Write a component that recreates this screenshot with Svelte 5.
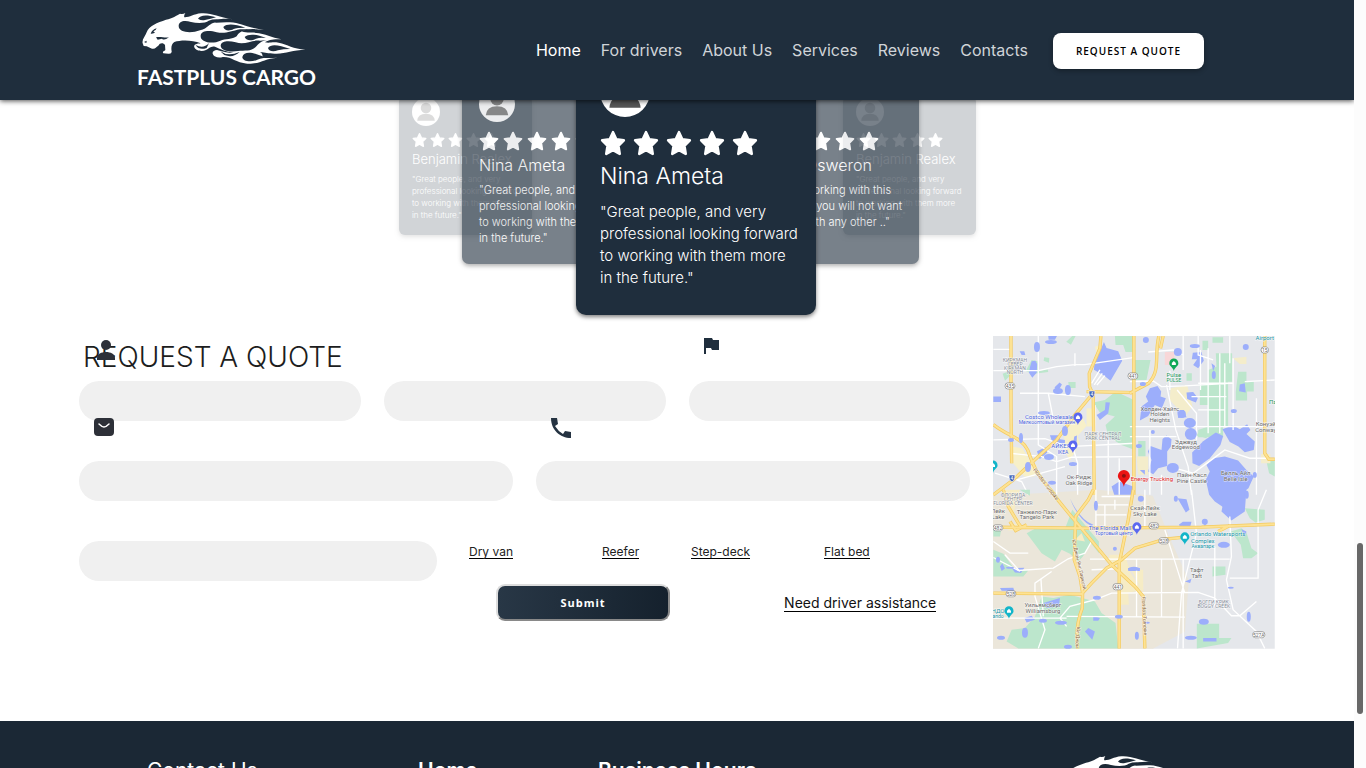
<script>
  const links = ['Home', 'For drivers', 'About Us', 'Services', 'Reviews', 'Contacts'];
  const great = '"Great people, and very\nprofessional looking forward\nto working with them more\nin the future."';
  const reviews = [
    { name: 'Benjamin Realex', text: great, place: 'far far-left' },
    { name: 'Benjamin Realex', text: great, place: 'far far-right' },
    { name: 'Nina Ameta', text: great, place: 'mid mid-left' },
    { name: 'Mark Osweron', text: '"I enjoy working with this\ncompany, you will not want\nto work with any other .."', place: 'mid mid-right' },
    { name: 'Nina Ameta', text: great, place: 'front' }
  ];
  const trailers = ['Dry van', 'Reefer', 'Step-deck', 'Flat bed'];
  const mapLabels = [
    [22, 26, 'КИРКМАН', 'g s'], [22, 30, 'СЕВЕР', 'g s'], [22, 34, 'KIRKMAN', 'g s'], [22, 38, 'NORTH', 'g s'],
    [56, 83, 'Costco Wholesale', 'b'], [54, 88, 'Мелкооптовый магазин', 'b s'],
    [68, 112, 'АЙКЕЯ', 'b'], [70, 118, 'IKEA', 'b s'],
    [110, 100, 'ПАРК СЕНТРАЛ', 'g s'], [110, 104, 'PARK CENTRAL', 'g s'],
    [86, 143, 'Ок-Ридж', 'd'], [86, 149, 'Oak Ridge', 'd'],
    [159, 145, 'Energy Trucking', 'r'],
    [181, 41, 'Pulse', 'n'], [181, 46, 'PULSE', 'n s'],
    [272, 4, 'Airport', 'c'], [280, 68, 'Па', 'n'],
    [167, 75, 'Холден-Хайтс', 'd'], [167, 80, 'Holden', 'd'], [167, 86, 'Heights', 'd'],
    [193, 108, 'Эджвуд', 'd'], [193, 113, 'Edgewood', 'd'],
    [273, 90, 'Конуэй', 'd'], [273, 96, 'Conway', 'd'],
    [199, 141, 'Пайн-Касл', 'd'], [199, 147, 'Pine Castle', 'd'],
    [243, 139, 'Белль Айл', 'd'], [243, 145, 'Belle Isle', 'd'],
    [20, 161, 'ФЛОРИДА', 'g s'], [20, 165, 'СЕНТЕР', 'g s'], [20, 169, 'FLORIDA CENTER', 'g s'],
    [5, 177, 'Лейк', 'd'], [5, 183, 'Lake', 'd'],
    [44, 178, 'Танжело-Парк', 'd'], [44, 183, 'Tangelo Park', 'd'],
    [152, 174, 'Скай-Лейк', 'd'], [152, 180, 'Sky Lake', 'd'],
    [117, 194, 'The Florida Mall', 'b'], [121, 199, 'Торговый центр', 'b s'],
    [225, 200, 'Orlando Watersports', 'c'], [210, 207, 'Complex', 'c'], [210, 212, 'Аквапарк', 'c s'],
    [204, 236, 'Тафт', 'd'], [204, 242, 'Taft', 'd'],
    [221, 268, 'БОГГИ КРИК', 'g s'], [221, 272, 'BOGGY CREEK', 'g s'],
    [50, 271, 'Уильямсберг', 'd'], [50, 277, 'Williamsburg', 'd'],
    [5, 277, 'НДО', 'c'], [5, 282, 'ando', 'c s']
  ];
  const shields = [[17, 50, '435'], [140, 40, '441'], [272, 14, '15'], [5, 192, '482'], [161, 190, '482'], [171, 205, '528'], [18, 258, '528'], [125, 251, '441'], [266, 299, '527A']];
  const ponds = [[44, 11, 3, 5], [58, 6, 6, 2], [65, 55, 5, 3], [75, 54, 3, 5], [51, 77, 6, 2], [28, 102, 2, 5], [18, 104, 3, 2], [72, 95, 3, 5], [56, 121, 5, 3], [80, 128, 4, 2], [35, 131, 3, 5], [59, 147, 4, 2], [153, 4, 3, 3], [185, 16, 4, 4], [202, 10, 5, 2], [253, 11, 3, 3], [221, 39, 2, 4], [241, 75, 3, 2], [146, 110, 3, 2], [160, 96, 2, 2], [150, 48, 3, 2], [189, 78, 4, 4], [197, 87, 6, 5], [198, 98, 6, 6], [180, 132, 6, 5], [262, 139, 2, 3], [103, 170, 2, 5], [148, 163, 3, 3], [122, 213, 2, 2], [141, 233, 6, 2], [212, 186, 3, 3], [231, 209, 6, 3], [50, 285, 4, 2], [68, 287, 6, 2], [126, 281, 4, 2], [154, 287, 3, 1], [211, 286, 5, 3], [238, 252, 3, 1], [5, 224, 2, 3], [17, 232, 4, 1], [32, 297, 3, 5], [8, 302, 4, 2], [254, 159, 2, 4], [183, 163, 2, 3], [104, 262, 4, 2], [198, 302, 6, 2], [256, 281, 2, 5], [75, 311, 4, 2], [144, 300, 2, 4]];
  const pins = [[181, 28, '#0fa958'], [85, 82, '#5b68f0'], [80, 110, '#5b68f0'], [144, 192, '#5b68f0'], [192, 202, '#12b5c9'], [16, 276, '#12b5c9'], [0, 130, '#12b5c9']];
</script>

{#snippet panther()}
  <svg class="panther" viewBox="51 33 528 162" aria-hidden="true">
    <path fill="#fff" d="M68 127C65 116 76 106 80 94C87 74 112 65 138 56C158 52 170 43 180 38Q188 41 196 36Q191 44 193 49C209 50 219 39 244 37C276 35 294 49 338 55C304 51 291 56 278 64C293 67 310 62 330 64C362 66 376 78 432 87C397 83 382 83 365 91C382 98 395 92 417 97C445 101 462 114 497 116C460 113 448 116 435 124C450 127 455 122 476 125C503 130 519 144 556 146C519 147 498 157 470 158C443 159 435 153 420 154C432 159 422 166 435 171Q450 172 473 170C430 173 424 189 382 188C345 184 334 166 308 168Q296 172 284 166C272 157 279 147 291 147C304 149 318 158 340 154C319 153 303 146 285 137C272 134 267 143 258 147C244 154 226 148 223 139C220 131 230 128 242 127C218 117 184 116 163 123C154 128 153 141 155 151Q156 159 145 158L130 157C126 151 132 151 136 147L135 132C130 124 119 125 115 134C107 138 107 145 96 143L80 136L71 135Z"/>
    <g class="cut">
      <path d="M176 75C176 59 195 57 213 63C232 67 257 67 266 59Q281 52 309 56Q290 58 281 65C264 71 266 80 240 88C213 98 176 95 176 75Z"/>
      <path d="M234 53C239 43 258 39 288 49Q272 54 255 57Q244 60 234 53Z"/>
      <path d="M242 104C243 88 270 88 290 94C316 99 332 91 360 85L393 85C365 89 356 95 350 106C337 116 316 113 301 119C276 131 240 123 242 104Z"/>
      <path d="M310 78C322 67 343 69 376 80Q350 80 341 84C329 91 313 90 310 78Z"/>
      <path d="M302 134C304 119 326 119 347 124C376 133 395 116 420 119L441 117C423 120 415 129 407 138C392 153 374 147 354 150C326 154 303 148 302 134Z"/>
      <path d="M374 108C385 99 405 98 438 111Q421 108 408 113C393 121 379 119 374 108Z"/>
      <path d="M444 141C453 128 476 132 511 144Q489 144 474 148C459 153 447 151 444 141Z"/>
      <path d="M367 168C371 153 390 153 410 160C423 165 437 171 456 169Q427 170 412 176C391 186 367 180 367 168Z"/>
      <path d="M92 98Q96 86 110 82Q107 90 100 91L105 95Q96 99 92 98Z"/>
      <path d="M108 109C122 105 133 112 147 109Q132 120 126 113L113 116Z"/>
      <path d="M72 123L80 119L79 126Z"/>
      <path d="M227 132Q250 145 267 126L260 141Q237 149 227 132Z"/>
      <path d="M301 151Q324 168 359 153Q339 172 313 162Z"/>
    </g>
  </svg>
{/snippet}

<div class="window">
  <div class="page">
    <header>
      <a class="logo" href="#home">{@render panther()}<span>FASTPLUS CARGO</span></a>
      <nav>
        {#each links as link, i}
          <a href="#{link}" class:active={i === 0}>{link}</a>
        {/each}
        <button class="quote">REQUEST A QUOTE</button>
      </nav>
    </header>

    <section class="carousel">
      {#each reviews as r}
        <article class="card {r.place}">
          <svg class="avatar" viewBox="0 0 48 48" aria-hidden="true">
            <circle cx="24" cy="24" r="24" fill="#fff"/>
            <circle cx="24" cy="17" r="9" fill="#555"/>
            <path d="M9 39Q10 27 24 27Q38 27 39 39Z" fill="#555"/>
          </svg>
          <div class="stars">
            {#each [1, 2, 3, 4, 5] as s (s)}
              <svg viewBox="0 0 24 24" aria-hidden="true"><path d="M12 2L15 8.6L22 9.5L17 14.5L18.2 22L12 18.6L5.800 22L7 14.500L2 9.500L9 8.600Z" fill="#fff" stroke="#fff" stroke-width="2.400" stroke-linejoin="round"/></svg>
            {/each}
          </div>
          <h3>{r.name}</h3>
          <p>{r.text}</p>
        </article>
      {/each}
    </section>

    <main>
      <form>
        <h2>REQUEST A QUOTE</h2>
        <div class="row three">
          <div class="field">
            <svg class="icon person" viewBox="0 0 18 20" aria-hidden="true"><circle cx="9" cy="5" r="5" fill="#2d3038"/><path d="M0 20V18C0 10 18 10 18 18V20Z" fill="#2d3038"/></svg>
            <input type="text" aria-label="First name" />
          </div>
          <div class="field"><input type="text" aria-label="Last name" /></div>
          <div class="field">
            <svg class="icon flag" viewBox="0 0 16 16" aria-hidden="true"><path d="M1 0H9L10 2H16V12H9L8 10H3V16H1Z" fill="#1f2e3d"/></svg>
            <input type="text" aria-label="Company" />
          </div>
        </div>
        <div class="row two">
          <div class="field">
            <svg class="icon mail" viewBox="0 0 20 18" aria-hidden="true"><rect width="20" height="18" rx="4" fill="#2d3038"/><path d="M5 6Q8 9 10 9T15 6" fill="none" stroke="#fff" stroke-width="1.500" stroke-linecap="round"/></svg>
            <input type="email" aria-label="Email" />
          </div>
          <div class="field">
            <svg class="icon phone" viewBox="0 0 20 20" aria-hidden="true"><path d="M0 0H6L7 6L4 8Q7 13 12 16L14 13L20 14V20C9 20 0 12 0 0Z" fill="#253342"/></svg>
            <input type="tel" aria-label="Phone" />
          </div>
        </div>
        <div class="row last">
          <div class="field"><input type="text" aria-label="Message" /></div>
          <div class="trailers">
            {#each trailers as t}<a href="#{t}">{t}</a>{/each}
          </div>
        </div>
        <div class="actions">
          <button type="button" class="submit">Submit</button>
          <a href="#assistance">Need driver assistance</a>
        </div>
      </form>

      <svg class="map" viewBox="0 0 282 313" role="img" aria-label="Map">
        <rect width="282" height="313" fill="#e5e7eb"/>
        <path d="M0 160L105 154L160 160L176 200L196 245L192 296L160 313H0Z" fill="#ebe6da"/>
        <g transform="translate(-8 -6) scale(.333333)">
          <g fill="#bce6cc">
            <path d="M325 218L360 210L393 185L450 212V360L410 345L370 320L362 285L390 260L345 248Z"/>
            <path d="M250 156H272V174H252ZM53 131L68 125L78 134L60 152ZM122 123L140 90L158 94L163 124L188 118L190 126L142 132ZM178 82L193 84L192 98L176 92ZM244 35L262 18H272L258 44ZM390 18H450V66H422L415 45H392Z"/>
          </g>
          <g fill="#f7f0c9"><path d="M238 288L290 255L305 288L278 318L285 340L255 392L238 360ZM78 350L112 355L132 388L155 405L148 440H118L80 395ZM305 235H330V290H305ZM330 50L350 44L340 90Z"/></g>
          <g fill="#9caefb">
            <path d="M330 82L344 68L357 36L365 54L400 64L412 92L377 152L356 136L327 119Z"/>
            <path d="M135 112L140 94L151 92L157 103L155 128L142 143L132 128ZM209 172L224 158L231 164L216 190ZM335 255L360 240L362 217L375 218L370 250L345 270ZM156 364L182 352L187 368L164 388ZM195 316H225V328L240 330V340H203ZM380 470L403 455L445 470L440 495H388ZM104 64H118L121 75H110ZM25 200H48V216H25ZM190 18H216L210 29H191ZM262 355L268 320L276 317L274 357Z"/>
          </g>
          <g fill="none" stroke="#fff" stroke-width="4">
            <path d="M25 122H105L160 122L215 110L270 104H300L450 82M160 18V345L215 380V495M105 190H190L300 200M190 190L207 277M330 225V495M25 58H80M25 330L180 326L250 350L450 340M75 370L170 380L215 395L260 382L450 380M95 450L240 410M270 70V108M30 430L110 455L130 495M370 320V495M260 340L278 400V495M403 385V495M320 160L345 120M328 165L352 130M336 165L360 137"/>
          </g>
          <g fill="none" stroke="#f3c95b" stroke-width="10" stroke-linejoin="round">
            <path d="M78 18V230L80 400M348 18L345 55L313 130L314 170L325 195L328 495M305 185L450 188M25 495L85 450L160 380L215 330L270 255L320 195M25 284C70 320 110 322 128 360C146 410 155 435 210 495" stroke="#f3ca60"/>
            <path d="M78 18V230L80 400M348 18L345 55L313 130L314 170L325 195L328 495M305 185L450 188M25 495L85 450L160 380L215 330L270 255L320 195M25 284C70 320 110 322 128 360C146 410 155 435 210 495" stroke="#fde293" stroke-width="6"/>
          </g>
        </g>
        <g transform="translate(137 -6) scale(.333333)">
          <g fill="#bce6cc"><path d="M258 70H307V155H295V290H280V322H205V300L235 290V225H210V165H235V120L260 110ZM218 32H235V60H218ZM248 22H280V38H248ZM170 130H186V152H170ZM325 125H350V158L372 155V185H352V212H318V185ZM10 90H62L50 150H10ZM25 333H47V380H25ZM408 385H435V440L418 430ZM190 315L240 300L230 325Z"/></g>
          <path d="M122 175L172 165L188 230L165 260L120 210ZM310 85L350 80V102H330ZM394 372H422V400H394ZM20 380H55V435H25Z" fill="#f4edcb"/>
          <path d="M105 66H133V105H105Z" fill="#f8d7d8"/>
          <g fill="#9caefb">
            <path d="M60 175L83 168L94 185L92 200L108 205L96 235L75 225L55 258L30 272L35 230L55 215L48 200Z"/>
            <path d="M62 348L95 360L98 327L110 317L125 328L123 350L112 365V408L85 415L70 433L55 425L65 390L54 365Z"/>
            <path d="M187 368L220 334L258 308L280 318L272 345L240 385L208 408L188 400Z"/>
            <path d="M278 298L310 286L330 298L352 283L362 300L350 312L375 335L372 360L345 367L326 350L300 336Z"/>
            <path d="M230 405L250 385L285 380L325 392L350 420L372 440L356 475L330 495L318 525L285 535L255 515L238 495L228 450L240 425Z"/>
            <path d="M170 188L190 186L204 204L198 218L172 207ZM189 68L215 66L222 92L205 115L190 105L202 88H186ZM330 164L345 160L348 188L328 184ZM245 100L256 108L250 123ZM142 240H162L170 262L145 264ZM30 420H45V435Z"/>
          </g>
          <g fill="none" stroke="#fff" stroke-width="4">
            <path d="M0 155L70 153L95 170L165 168L300 160M110 165L138 300L175 410L185 495M55 66L130 60L160 75M120 122V180M142 180L200 250V330M160 18V120M205 18V75L250 90M0 290H400M300 18V100M285 100V290M310 85V300M212 60V180M235 55V310M135 415L190 430L245 390L285 360L360 385L410 385M60 300V495M95 435V495M380 205V495M0 320H140M185 200H290M205 160H310M205 240H285M270 70V310M345 155L435 150"/>
          </g>
          <path d="M87 18C72 80 94 120 56 160L0 190M12 18V495M405 18V370L417 388H435M100 18L92 55" fill="none" stroke="#f3ca60" stroke-width="10"/>
          <path d="M87 18C72 80 94 120 56 160L0 190M12 18V495M405 18V370L417 388H435M100 18L92 55" fill="none" stroke="#fde293" stroke-width="6"/>
        </g>
        <g transform="translate(-8 154) scale(.333333)">
          <g fill="#bce6cc"><path d="M150 117H240L262 60L342 155V190L318 160L294 200L280 215L255 192L230 180L210 215L170 190L125 130ZM25 180L55 192L90 240L130 242L115 260H25ZM170 320L205 325L255 315L330 335L350 370L392 400L400 476H100L65 455L80 420L120 415L150 380ZM636 402H703V445H740L730 460L636 476ZM738 125L770 115L785 128L800 175L820 190L800 205H775L768 165ZM780 55L840 60V90L812 98L795 85ZM683 230H722V255L683 260ZM104 0H135V18ZM25 110L50 112L45 140H25Z"/></g>
          <path d="M55 0H105L85 70L110 110L95 122H70V110L95 100L70 20ZM372 195H420L437 250L470 300L430 310L432 345H408V230L372 220ZM270 150L290 130L300 155ZM440 240H475V310Z" fill="#f6ecc5"/>
          <g fill="#9caefb">
            <path d="M683 0H785L780 65L740 92L710 65L717 30L682 15ZM578 25L605 28L614 60L603 68ZM582 105L594 96H620L615 115H590ZM655 88L667 95L660 110ZM770 118L785 125L780 142ZM80 235L118 234L108 250L90 248ZM45 230L52 220L60 236L50 244ZM310 415L330 425L322 450L300 425ZM325 378L345 385L340 393H325ZM118 385L140 378L150 390L125 398ZM175 340L225 325L222 350L185 355ZM45 295L85 294L88 304L50 303ZM600 275L620 267L616 280ZM655 445H695V455H655Z"/>
            <path d="M255 25Q285 90 325 105L321 110Q280 90 255 25ZM430 235H465V244H430Z"/>
          </g>
          <g fill="none" stroke="#fff" stroke-width="4">
            <path d="M25 203L100 242L205 235L250 207L300 190L320 155M60 195L105 245M320 240L400 237M315 208H735M25 155L75 190H130M168 268L175 380M200 245L150 280V320L180 420L160 476M245 410L225 385L255 350L330 330L380 310L640 308L690 325L740 378H765L815 335M25 385H245M245 380L600 382M455 208V380M530 210V380M595 208V476M620 0L635 130L610 230L590 310L578 476M735 80L740 200L725 270L745 360L815 425L840 476M735 265H820V60L845 0M690 170V350M333 0V120M360 45V120M390 30V60M333 45H430M333 75H425M350 20H440M480 0V110M600 310L540 120"/>
          </g>
          <path d="M25 112L300 115L650 112L870 103M195 0Q250 70 285 110L380 225L450 290L475 320L480 476M445 0L430 90L403 220V476M325 0L310 30L272 80L268 210L285 260L293 310L292 355Q270 410 278 476M25 310L290 313L320 280L365 235L410 210L450 175L540 148L600 142M55 0L70 50L100 100L110 113M75 95L92 122L125 105M700 125L735 107" fill="none" stroke="#f3ca60" stroke-width="10"/>
          <path d="M25 112L300 115L650 112L870 103M195 0Q250 70 285 110L380 225L450 290L475 320L480 476M445 0L430 90L403 220V476M325 0L310 30L272 80L268 210L285 260L293 310L292 355Q270 410 278 476M25 310L290 313L320 280L365 235L410 210L450 175L540 148L600 142M55 0L70 50L100 100L110 113M75 95L92 122L125 105M700 125L735 107" fill="none" stroke="#fde293" stroke-width="6"/>
        </g>
        {#each ponds as [x, y, rx, ry]}<ellipse cx={x} cy={y} {rx} {ry} fill="#9caefb"/>{/each}
        {#each [[99, 58], [19, 142]] as [x, y]}
          <path d="M{x - 3} {y - 3}H{x + 3}Q{x + 3} {y + 3} {x} {y + 4}Q{x - 3} {y + 3} {x - 3} {y - 3}Z" fill="#4867ba" stroke="#fff" stroke-width=".6"/>
          <text x={x} y={y + 2} class="s w">4</text>
        {/each}
        {#each shields as [x, y, n]}
          <rect x={x - (n.length + 1) * 1.2} y={y - 3} width={(n.length + 1) * 2.4} height="6" rx="2.500" fill="#fff" stroke="#777" stroke-width=".7"/>
          <text {x} y={y + 2} class="s d">{n}</text>
        {/each}
        {#each mapLabels as [x, y, t, c]}<text {x} {y} class={c}>{t}</text>{/each}
        <text class="road" transform="translate(40 134) rotate(53)">Florida's Turnpike</text>
        <text class="road" transform="translate(79 204) rotate(77)">Юг Джон Янг Паркуэй</text>
        <text class="road" transform="translate(149 261) rotate(87)">Florida's Turnpike</text>
        <text class="road" transform="translate(84 291) rotate(94)">Юг Джон</text>
        {#each pins as [x, y, c]}
          <path d="M{x} {y + 7}C{x - 1} {y + 3} {x - 5} {y + 2} {x - 4.500} {y - 1}A4.500 4.500 0 0 1 {x + 4.500} {y - 1}C{x + 5} {y + 2} {x + 1} {y + 3} {x} {y + 7}Z" fill={c}/>
          <path d="M{x - 2} {y + 1}V{y - 1}L{x} {y - 3}L{x + 2} {y - 1}V{y + 1}Z" fill="#fff"/>
        {/each}
        <path d="M131 151C130 145 124.500 144 125 140A6 6 0 0 1 137 140C137.500 144 132 145 131 151Z" fill="#ea1414"/>
        <circle cx="131" cy="140" r="2" fill="#8f1111"/>
      </svg>
    </main>

    <footer>
      <h4 class="light">Contact Us</h4>
      <h4>Home</h4>
      <h4>Business Hours</h4>
      <div class="logo">{@render panther()}<span>FASTPLUS CARGO</span></div>
    </footer>
  </div>
  <div class="track"><div class="thumb"></div></div>
</div>

<style>
  :global(body) { margin: 0; background: #fff; }
  * { box-sizing: border-box; }
  .window { display: grid; grid-template-columns: minmax(0, 1fr) 12px; height: 100vh; overflow: hidden; font-family: Inter, "Open Sans", sans-serif; }
  .page { overflow: hidden; }
  a { color: inherit; text-decoration: none; }
  h2, h3, h4, p { margin: 0; }

  header { position: relative; z-index: 5; height: 100px; padding: 0 150px 0 137px; display: flex; align-items: center; justify-content: space-between; background: #1f2e3d; --cut: #1f2e3d; box-shadow: 0 1px 5px rgba(0, 0, 0, .7); }
  .logo { display: flex; flex-direction: column; color: #fff; font: 700 21px/22px Lato, sans-serif; white-space: nowrap; }
  .panther { display: block; width: 176px; height: 54px; }
  .cut { fill: var(--cut); }
  nav { display: flex; align-items: center; gap: 20px; color: #d0d4d8; font-size: 16px; white-space: nowrap; }
  nav .active { color: #fff; }
  .quote { width: 151px; height: 36px; margin: 2px 0 0 5px; padding: 0; border: 0; border-radius: 8px; background: #fff; color: #000; font: 600 10px "Open Sans", sans-serif; letter-spacing: 1px; box-shadow: 0 2px 5px rgba(0, 0, 0, .3); }

  .carousel { position: relative; height: 236px; }
  .card { position: absolute; left: calc(50% + var(--x)); color: #fff; background: #1f2e3d; box-shadow: 0 2px 4px rgba(0, 0, 0, .5); font-weight: 300; }
  .card h3 { font-weight: 300; white-space: nowrap; }
  .card p { white-space: pre; }
  .avatar { display: block; }
  .stars { display: flex; }
  .front { --x: -101px; width: 240px; height: 240px; top: -25px; padding: 0 18px 0 24px; border-radius: 10px; }
  .front .avatar { width: 50px; height: 50px; margin-top: -8px; }
  .front .stars { gap: 7px; margin-top: 12px; }
  .front .stars svg { width: 26px; height: 28px; }
  .front h3 { font-size: 23px; line-height: 34px; margin: 2px 0 8px; }
  .front p { font-size: 15px; line-height: 22px; }
  .mid { width: 173px; height: 174px; top: -10px; padding: 0 16px 0 17px; border-radius: 7px; opacity: .6; }
  .mid-left { --x: -215px; }
  .mid-right { --x: 69px; }
  .mid .avatar { width: 36px; height: 36px; margin-top: -4px; }
  .mid .stars { gap: 4px; margin-top: 9px; }
  .mid .stars svg { width: 20px; height: 20px; }
  .mid h3 { font-size: 16px; line-height: 24px; margin: 2px 0 5px; }
  .mid p { font-size: 11px; line-height: 16px; }
  .far { width: 133px; height: 139px; top: -4px; padding: 0 12px 0 13px; border-radius: 6px; opacity: .2; }
  .far-left { --x: -278px; }
  .far-right { --x: 166px; }
  .far .avatar { width: 28px; height: 28px; margin-top: 2px; }
  .far .stars { gap: 3px; margin-top: 6px; }
  .far .stars svg { width: 15px; height: 16px; }
  .far h3 { font-size: 13px; line-height: 18px; margin: 2px 0 5px; }
  .far p { font-size: 8px; line-height: 12px; }

  main { display: grid; grid-template-columns: repeat(4, minmax(0, 1fr)); column-gap: 23px; padding: 0 79px 72px; }
  form { grid-column: span 3; min-width: 0; }
  h2 { height: 45px; padding-left: 4px; color: #1c1d20; font: 300 28px/42px Inter, sans-serif; }
  .row { display: grid; gap: 23px; margin-bottom: 40px; }
  .three { grid-template-columns: repeat(3, minmax(0, 1fr)); }
  .two { grid-template-columns: repeat(2, minmax(0, 1fr)); }
  .last { grid-template-columns: 358px minmax(0, 1fr); gap: 32px; margin-bottom: 3px; }
  .field { position: relative; }
  input { display: block; width: 100%; height: 40px; padding: 0 24px; border: 0; border-radius: 20px; background: #f0f0f0; font: 14px Inter, sans-serif; }
  .icon { position: absolute; }
  .person { left: 18px; top: -41px; width: 18px; height: 20px; }
  .flag { left: 14px; top: -43px; width: 16px; height: 16px; }
  .mail { left: 15px; top: -43px; width: 20px; height: 18px; }
  .phone { left: 15px; top: -43px; width: 20px; height: 20px; }
  .trailers { display: grid; grid-template-columns: 133px 89px 133px auto; justify-content: start; padding-top: 3px; font-size: 12px; line-height: 16px; color: #222; }
  .trailers a { justify-self: start; height: 15px; border-bottom: 1px solid #000; }
  .actions { display: flex; align-items: center; padding: 0 34px 0 417px; justify-content: space-between; font-size: 14px; color: #111; white-space: nowrap; }
  .actions a { border-bottom: 1px solid #000; line-height: 17px; }
  .submit { width: 174px; height: 37px; border: 2px outset #ddd; border-radius: 9px; background: linear-gradient(90deg, #283746, #15212d); color: #fff; font: 700 11px "Open Sans", sans-serif; letter-spacing: 1px; }
  .map { display: block; width: 100%; height: auto; }
  text { font: 6px Roboto, sans-serif; text-anchor: middle; paint-order: stroke; stroke: rgba(255, 255, 255, .7); stroke-width: 1px; fill: #6a6a6a; }
  .s { font-size: 5px; }
  .g { fill: #858b98; }
  .b { fill: #4a62dc; }
  .c { fill: #1795a8; }
  .n { fill: #199358; }
  .r { fill: #e01e2b; }
  .w { fill: #fff; stroke: none; }
  .road { text-anchor: start; font-size: 5px; fill: #87633b; }

  footer { display: grid; grid-template-columns: 271px 180px 459px auto; height: 300px; padding: 34px 0 0 147px; background: #1b2835; --cut: #1b2835; color: #fff; }
  h4 { margin-top: 2px; font-size: 21px; line-height: 28px; font-weight: 600; }
  h4.light { font-weight: 400; }
  .track { padding: 543px 3px 0; background: #fcfcfc; }
  .thumb { height: 171px; border-radius: 3px; background: #686868; }
</style>
